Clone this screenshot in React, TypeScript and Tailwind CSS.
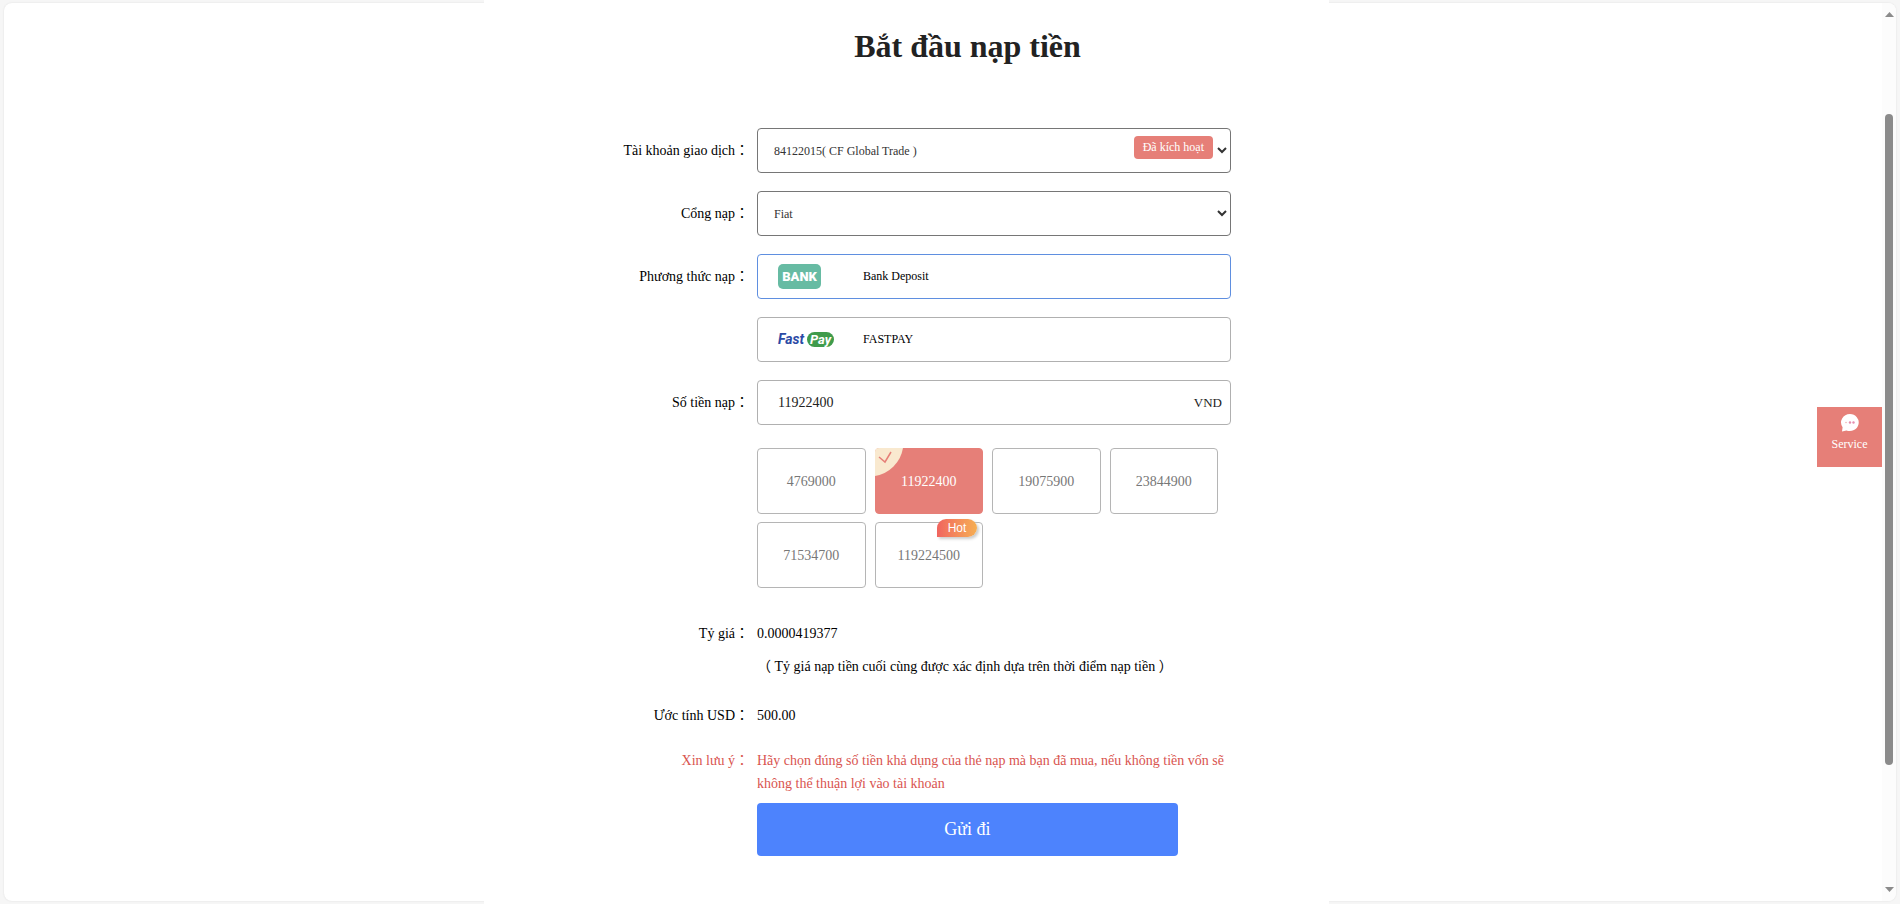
import React, { useState } from 'react';

interface Amount {
  value: string;
  hot?: boolean;
}

const AMOUNTS: Amount[] = [
  { value: '4769000' },
  { value: '11922400' },
  { value: '19075900' },
  { value: '23844900' },
  { value: '71534700' },
  { value: '119224500', hot: true },
];

const RATE = 0.0000419377;

const BankLogo = () => (
  <span className="flex h-[25px] w-[43px] items-center justify-center rounded-[5px] bg-[#67bba3] font-['Roboto',sans-serif] text-[13px] leading-none font-black text-white">
    BANK
  </span>
);

const FastPayLogo = () => (
  <span className="flex items-center gap-[3px] font-['Roboto',sans-serif] text-[14px] leading-[15px] font-bold italic">
    <span className="text-[#2b4aa5]">Fast</span>
    <span className="rounded-full bg-[#3f9b4b] px-[3px] text-[13px] text-white">Pay</span>
  </span>
);

const METHODS = [
  { id: 'bank', name: 'Bank Deposit', logo: <BankLogo /> },
  { id: 'fastpay', name: 'FASTPAY', logo: <FastPayLogo /> },
];

const ServiceIcon = () => (
  <svg className="h-5 w-5" viewBox="0 0 20 20">
    <path d="M10 1a9 8.500 0 1 1-3.600 16.400L2 18.500l.6-4.300A9 8.500 0 0 1 10 1z" fill="#fff" />
    <circle cx="6" cy="9.500" r="0.800" fill="#f0b5b2" />
    <circle cx="10" cy="9.500" r="1.200" fill="#e58fb0" />
    <circle cx="13.500" cy="9.500" r="1.200" fill="#e58fb0" />
  </svg>
);

const Scrollbar = () => (
  <div className="flex w-[14px] flex-col items-center bg-[#fcfcfc] pt-[9px] pb-[9px]">
    <svg className="h-[5px] w-[9px]" viewBox="0 0 9 5">
      <path d="M0 5 4.500 0 9 5z" fill="#8b8b8b" />
    </svg>
    <div className="w-2 flex-1 pt-[97px] pb-[122px]">
      <div className="h-full rounded-full bg-[#8b8b8b]" />
    </div>
    <svg className="h-[5px] w-[9px]" viewBox="0 0 9 5">
      <path d="M0 0h9L4.500 5z" fill="#8b8b8b" />
    </svg>
  </div>
);

interface RowProps {
  label: string;
  htmlFor?: string;
  className?: string;
  children: React.ReactNode;
}

const Row = ({ label, htmlFor, className = 'leading-[45px]', children }: RowProps) => (
  <div className={`flex ${className}`}>
    <label htmlFor={htmlFor} className="w-[265px] shrink-0 pr-2 text-right">
      {label}：
    </label>
    <div className="w-[474px]">{children}</div>
  </div>
);

const App = () => {
  const [amount, setAmount] = useState('11922400');
  const [method, setMethod] = useState('bank');

  return (
    <div className="grid min-h-screen bg-[#f6f6f6] font-['Liberation_Serif','Noto_Sans_CJK_JP',serif] text-[14px] text-black">
      <div className="col-start-1 row-start-1 mx-1 my-[3px] flex justify-end overflow-hidden rounded-lg bg-white shadow-[0_0_2px_#ddd]">
        <Scrollbar />
      </div>

      <div className="z-10 col-start-1 row-start-1 flex justify-center pr-[87px]">
        <form className="w-[845px] bg-white" onSubmit={(e) => e.preventDefault()}>
          <h1 className="pt-[26px] pl-[122px] text-center text-[32px] leading-[40px] font-bold text-[#222]">
            Bắt đầu nạp tiền
          </h1>

          <div className="mt-[62px] ml-2 flex flex-col gap-[18px]">
            <Row label="Tài khoản giao dịch" htmlFor="account">
              <div className="relative">
                <select id="account" className="block h-[45px] w-full rounded-[4px] border border-[#767676] bg-white px-3 text-[12px] text-[#333]">
                  <option>84122015( CF Global Trade )</option>
                </select>
                <span className="pointer-events-none absolute top-2 right-[18px] rounded-[4px] bg-[#e67f78] px-[9px] text-[12px] leading-[23px] text-white">
                  Đã kích hoạt
                </span>
              </div>
            </Row>

            <Row label="Cổng nạp" htmlFor="gateway">
              <select id="gateway" className="block h-[45px] w-full rounded-[4px] border border-[#767676] bg-white px-3 text-[12px] text-[#333]">
                <option>Fiat</option>
              </select>
            </Row>

            <Row label="Phương thức nạp">
              <div className="flex flex-col gap-[18px]">
                {METHODS.map((m) => (
                  <label
                    key={m.id}
                    className={`flex h-[45px] items-center rounded-[4px] border pl-5 text-[12px] ${
                      method === m.id ? 'border-[#5f8fe0]' : 'border-[#b0b0b0]'
                    }`}
                  >
                    <input
                      type="radio"
                      name="method"
                      className="sr-only"
                      checked={method === m.id}
                      onChange={() => setMethod(m.id)}
                    />
                    <span className="w-[85px]">{m.logo}</span>
                    {m.name}
                  </label>
                ))}
              </div>
            </Row>

            <Row label="Số tiền nạp" htmlFor="amount">
              <div className="flex h-[45px] items-center rounded-[4px] border border-[#b0b0b0] pr-2 pl-5 text-[#222]">
                <input
                  id="amount"
                  className="min-w-0 flex-1 outline-none"
                  value={amount}
                  onChange={(e) => setAmount(e.target.value)}
                />
                <span className="text-[13px]">VND</span>
              </div>
            </Row>
          </div>

          <div className="mt-[23px] ml-[273px] grid w-[461px] grid-cols-4 gap-x-[9px] gap-y-2">
            {AMOUNTS.map((a) => (
              <button
                key={a.value}
                type="button"
                onClick={() => setAmount(a.value)}
                className={`relative h-[66px] rounded-[4px] border ${
                  amount === a.value
                    ? 'border-[#e67f78] bg-[#e67f78] text-white'
                    : 'border-[#b5b5b5] bg-white text-[#777]'
                }`}
              >
                {amount === a.value && (
                  <svg className="absolute -top-px -left-px h-7 w-7" viewBox="0 0 28 28">
                    <path d="M4 0h24A34 34 0 0 1 0 28V4a4 4 0 0 1 4-4z" fill="#f9e9cf" />
                    <path d="M4 9l6 5 6-10" fill="none" stroke="#e67f78" strokeWidth="1.500" />
                  </svg>
                )}
                {a.value}
                {a.hot && (
                  <span className="absolute -top-1 right-[5px] w-10 rounded-[9px] rounded-bl-none bg-gradient-to-r from-[#f0645f] to-[#f5ae52] font-['Liberation_Sans',sans-serif] text-[12px] leading-[18px] text-white shadow-[2px_2px_3px_#ccc]">
                    Hot
                  </span>
                )}
              </button>
            ))}
          </div>

          <div className="ml-2">
            <Row label="Tỷ giá" className="mt-[29px] leading-[33px]">
              <p>{RATE.toFixed(10)}</p>
              <p>（ Tỷ giá nạp tiền cuối cùng được xác định dựa trên thời điểm nạp tiền ）</p>
            </Row>
            <Row label="Ước tính USD" className="mt-4 leading-[33px]">
              {(Number(amount) * RATE).toFixed(2)}
            </Row>
            <Row label="Xin lưu ý" className="mt-[17px] leading-[23px] text-[#d9544f]">
              Hãy chọn đúng số tiền khả dụng của thẻ nạp mà bạn đã mua, nếu không tiền vốn sẽ không thể thuận lợi vào tài khoản
            </Row>
          </div>

          <button type="submit" className="mt-2 mb-12 ml-[273px] block h-[53px] w-[421px] rounded-[4px] bg-[#4d83fd] text-[18px] text-white">
            Gửi đi
          </button>
        </form>
      </div>

      <button
        type="button"
        className="fixed top-[45%] right-[18px] z-20 flex h-[60px] w-[65px] flex-col items-center bg-[#e67f78] pt-[6px] text-[12px] leading-[22px] text-white"
      >
        <ServiceIcon />
        Service
      </button>
    </div>
  );
};

export default App;
